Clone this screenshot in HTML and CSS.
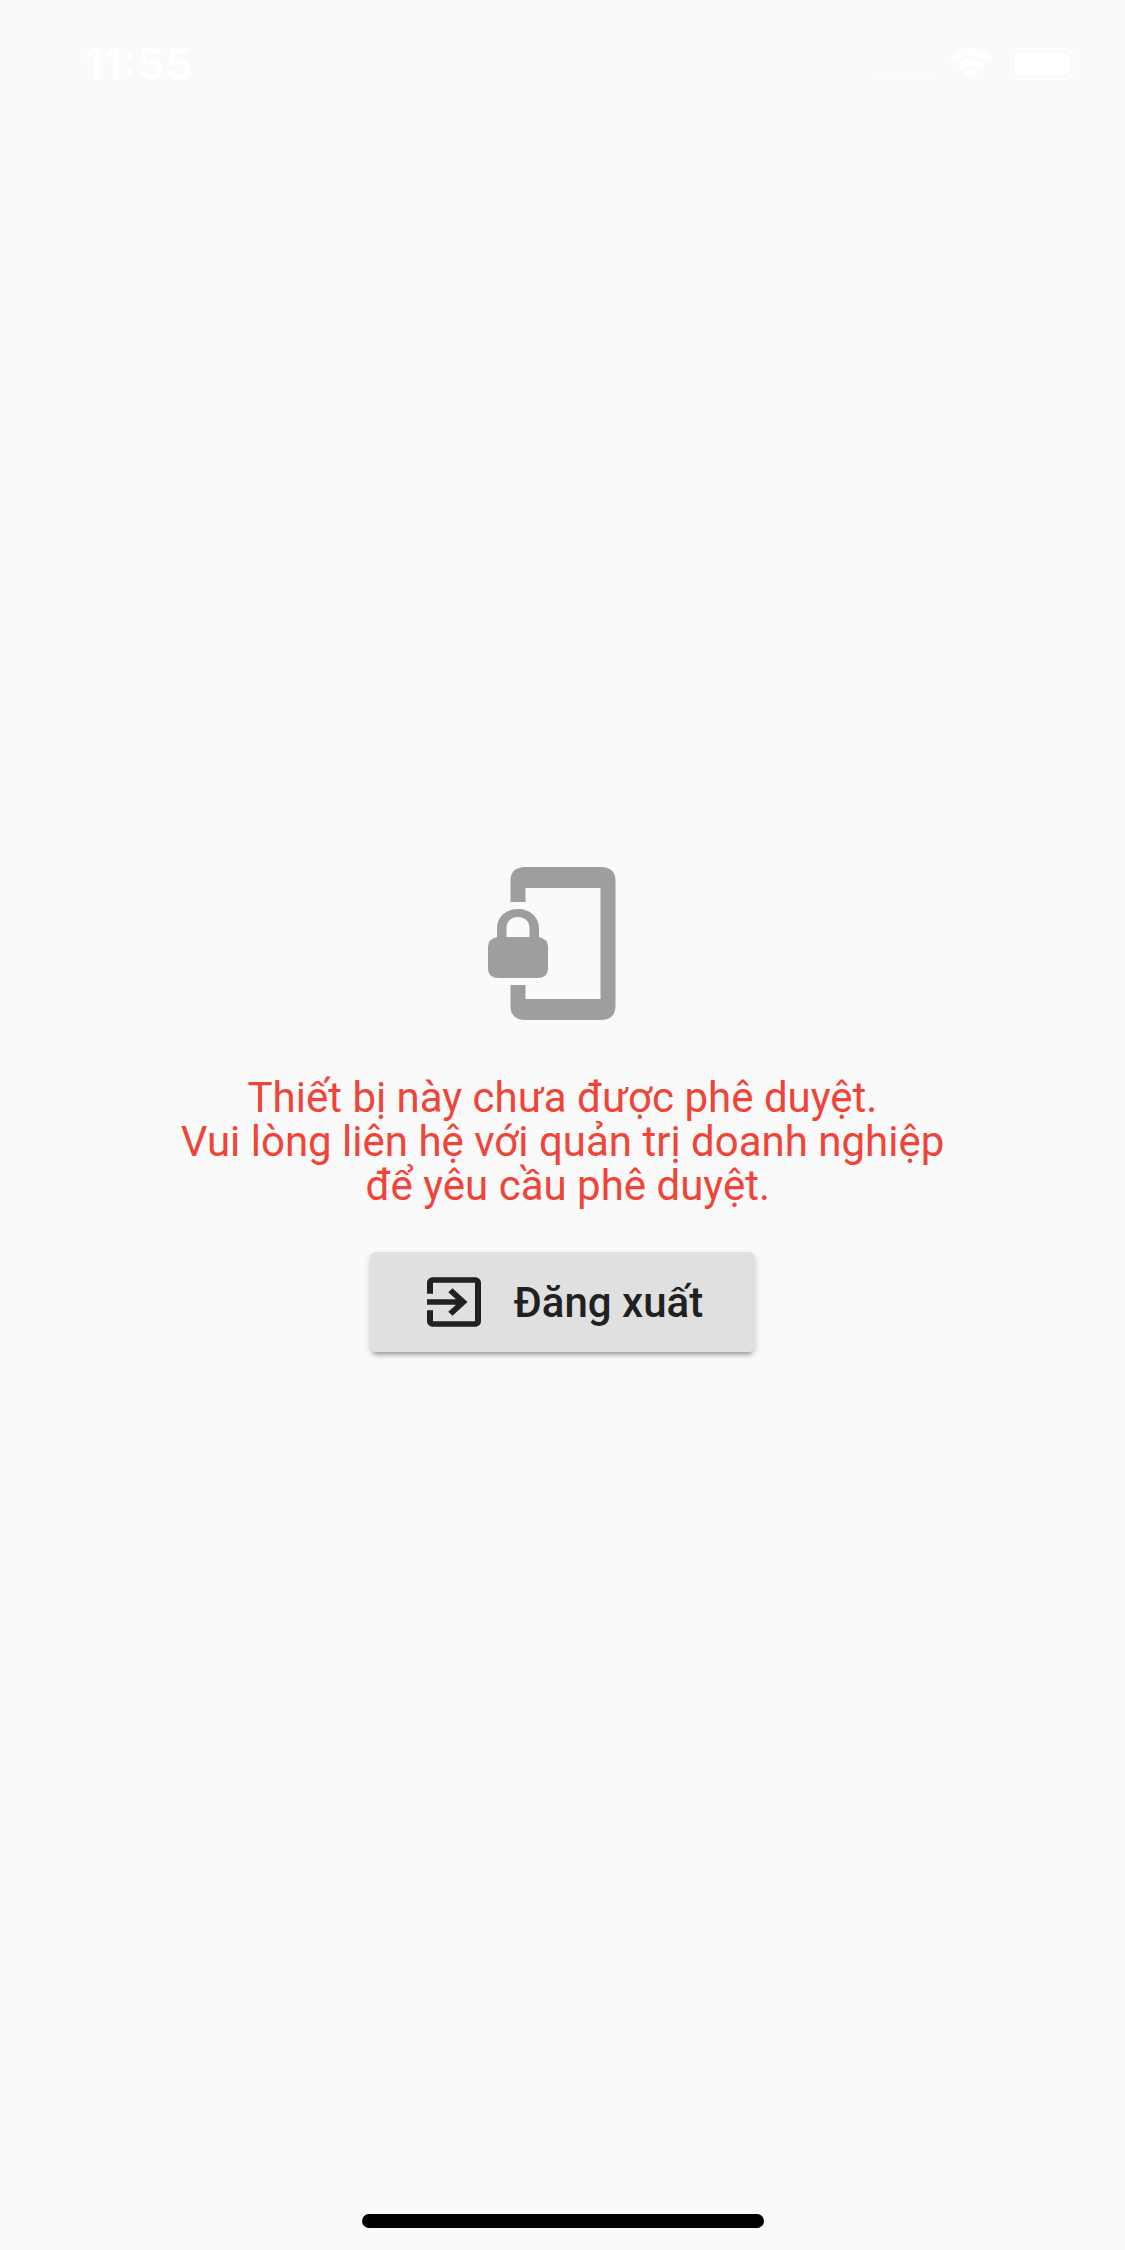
FILE: index.html
```
<!DOCTYPE html>
<html lang="vi">
<head>
    <meta charset="UTF-8">
    <meta name="viewport" content="width=device-width, initial-scale=1">
    <title>Thiết bị chưa được phê duyệt</title>
    <link rel="stylesheet" href="styles.css">
</head>
<body>
    <header class="status-bar">
        <span class="time">11:55</span>
        <div class="status-icons">
            <svg class="signal" width="58" height="32" viewBox="0 0 58 32" aria-hidden="true">
                <circle cx="5" cy="27" r="4"/>
                <circle cx="21" cy="27" r="4"/>
                <circle cx="37" cy="27" r="4"/>
                <circle cx="53" cy="27" r="4"/>
            </svg>
            <svg width="44" height="32" viewBox="0 0 44 32" aria-hidden="true">
                <path d="M0 9Q22-9 44 9L39 14Q22 0 5 14Z"/>
                <path d="M8 17Q22 4 36 17L31 22Q22 14 13 22Z"/>
                <path d="M15 25Q22 19 29 25L22 32Z"/>
            </svg>
            <svg width="70" height="32" viewBox="0 0 70 32" aria-hidden="true">
                <rect class="battery-shell" x="1" y="1" width="63" height="30" rx="8"/>
                <rect x="5" y="5" width="55" height="22" rx="4"/>
                <path class="battery-cap" d="M66 11q4 1 4 5t-4 5z"/>
            </svg>
        </div>
    </header>

    <main class="content">
        <svg class="lock-icon" width="180" height="166" viewBox="0 0 180 166" aria-hidden="true">
            <!-- phone -->
            <path d="M37.5 42V21Q37.5 7 52.5 7H127.5Q142.5 7 142.5 21V146Q142.5 160 127.5 160H52.5Q37.5 160 37.5 146V125H52.5V139H127.5V28H52.5V42Z"/>
            <!-- padlock -->
            <path fill-rule="evenodd" d="M24 77V68C24 57 33 49 45 49S66 57 66 68V77Q75 79 75 87V108Q75 118 64 118H26Q15 118 15 108V87Q15 79 24 77ZM33.5 77H56.5V68C56.5 61 51.5 57 45 57S33.5 61 33.5 68Z"/>
        </svg>
        <p class="message">
            Thiết bị này chưa được phê duyệt.<br>
            Vui lòng liên hệ với quản trị doanh nghiệp<br>
            &nbsp;để yêu cầu phê duyệt.
        </p>
        <button type="button" class="logout">
            <svg width="72" height="66" viewBox="0 0 24 24" preserveAspectRatio="none" aria-hidden="true">
                <path d="M10.09 15.59L11.5 17l5-5-5-5-1.41 1.41L12.67 11H3v2h9.67l-2.58 2.59zM19 3H5c-1.11 0-2 .9-2 2v4h2V5h14v14H5v-4H3v4c0 1.1.89 2 2 2h14c1.1 0 2-.9 2-2V5c0-1.1-.9-2-2-2z"/>
            </svg>
            <span>Đăng xuất</span>
        </button>
    </main>

    <footer class="home-area">
        <div class="home-indicator"></div>
    </footer>
</body>
</html>
```
FILE: styles.css
```
* {
    box-sizing: border-box;
}

body {
    margin: 0;
    min-height: 100vh;
    display: flex;
    flex-direction: column;
    background: #fafafa;
    font-family: Roboto, "Noto Sans", sans-serif;
}

.status-bar {
    display: flex;
    justify-content: space-between;
    align-items: center;
    height: 128px;
    padding: 0 46px 0 84px;
    color: #fff;
}

.time {
    font-family: Inter, sans-serif;
    font-size: 44px;
    font-weight: 700;
}

.status-icons {
    display: flex;
    align-items: center;
    gap: 16px;
}

.status-icons svg {
    fill: #fff;
}

.status-icons .signal {
    opacity: 0.3;
}

.status-icons .battery-shell {
    fill: none;
    stroke: #fff;
    stroke-width: 2;
    opacity: 0.5;
}

.status-icons .battery-cap {
    opacity: 0.5;
}

.content {
    flex: 1;
    display: flex;
    flex-direction: column;
    align-items: center;
    justify-content: center;
    padding: 0 48px 130px;
}

.lock-icon {
    fill: #9e9e9e;
}

.message {
    margin: 50px 0 44px;
    color: #f04438;
    font-size: 42px;
    line-height: 44px;
    text-align: center;
}

.logout {
    display: flex;
    align-items: center;
    gap: 24px;
    height: 100px;
    padding: 0 52px 0 48px;
    border: none;
    border-radius: 6px;
    background: #e0e0e0;
    box-shadow: 0 6px 4px -4px rgba(0, 0, 0, 0.25), 0 3px 6px rgba(0, 0, 0, 0.2);
    color: #212121;
    font-family: inherit;
    font-size: 42px;
    font-weight: 500;
    cursor: pointer;
}

.logout svg {
    fill: #212121;
}

.home-area {
    display: flex;
    justify-content: center;
    padding-bottom: 22px;
}

.home-indicator {
    width: 402px;
    height: 14px;
    border-radius: 7px;
    background: #000;
}
```
